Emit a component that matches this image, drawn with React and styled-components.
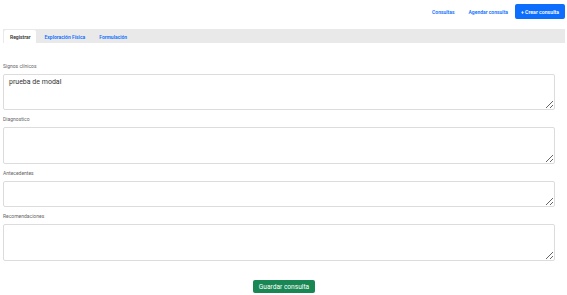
import React from "react"
import styled, { createGlobalStyle } from "styled-components"

const GlobalStyle = createGlobalStyle`
  body {
    margin: 0;
    background: #fff;
    font-family: Roboto, "Liberation Sans", sans-serif;
  }
`

const Page = styled.div`
  padding: 4px 2px 0 3px;
`

const Header = styled.div`
  display: flex;
  justify-content: flex-end;
  align-items: center;
  height: 15px;
`

const NavLink = styled.a`
  color: #0d6efd;
  font-size: 5px;
  font-weight: 600;
  padding: 0 7px;
  text-decoration: none;
`

const PrimaryButton = styled.button`
  background: #0d6efd;
  color: #fff;
  border: none;
  border-radius: 2px;
  font-family: inherit;
  font-size: 5.2px;
  font-weight: 600;
  height: 15px;
  width: 50px;
  padding: 0;
`

const TabBar = styled.div`
  display: flex;
  align-items: flex-end;
  margin-top: 10px;
  height: 14px;
  background: #e9e9e9;
  padding-left: 1px;
`

const Tab = styled.div`
  height: 13px;
  display: flex;
  align-items: center;
  padding: 0 6px;
  font-size: 5px;
  font-weight: 600;
  color: ${p => (p.$active ? "#333" : "#0d6efd")};
  background: ${p => (p.$active ? "#fff" : "transparent")};
  border-radius: 2px 2px 0 0;
  margin-right: 2px;
`

const Form = styled.div`
  margin-top: 20px;
  padding-right: 10px;
`

const Field = styled.div`
  margin-bottom: 6px;
`

const Label = styled.div`
  font-size: 5px;
  line-height: 7px;
  color: #666;
  margin-bottom: 4px;
`

const TextArea = styled.textarea`
  display: block;
  box-sizing: border-box;
  width: 100%;
  height: ${p => p.$h}px;
  border: 1px solid #dcdcdc;
  border-radius: 2px;
  padding: 3px 5px;
  font-family: inherit;
  font-size: 7px;
  color: #333;
  resize: vertical;
  margin: 0;
`

const Footer = styled.div`
  display: flex;
  justify-content: center;
  margin-top: 19px;
`

const SaveButton = styled.button`
  background: #198754;
  color: #fff;
  border: none;
  border-radius: 2px;
  font-family: inherit;
  font-size: 6.6px;
  height: 13px;
  width: 62px;
  padding: 0;
`

const fields = [
  { label: "Signos clínicos", h: 36, value: "prueba de modal" },
  { label: "Diagnostico", h: 37, value: "" },
  { label: "Antecedentes", h: 26, value: "" },
  { label: "Recomendaciones", h: 37, value: "" },
]

const App = () => {
  return (
    <Page>
      <GlobalStyle />
      <Header>
        <NavLink>Consultas</NavLink>
        <NavLink>Agendar consulta</NavLink>
        <PrimaryButton>+ Crear consulta</PrimaryButton>
      </Header>
      <TabBar>
        <Tab $active>Registrar</Tab>
        <Tab>Exploración Física</Tab>
        <Tab>Formulación</Tab>
      </TabBar>
      <Form>
        {fields.map(f => (
          <Field key={f.label}>
            <Label>{f.label}</Label>
            <TextArea $h={f.h} defaultValue={f.value} spellCheck={false} />
          </Field>
        ))}
      </Form>
      <Footer>
        <SaveButton>Guardar consulta</SaveButton>
      </Footer>
    </Page>
  )
}

export default App
